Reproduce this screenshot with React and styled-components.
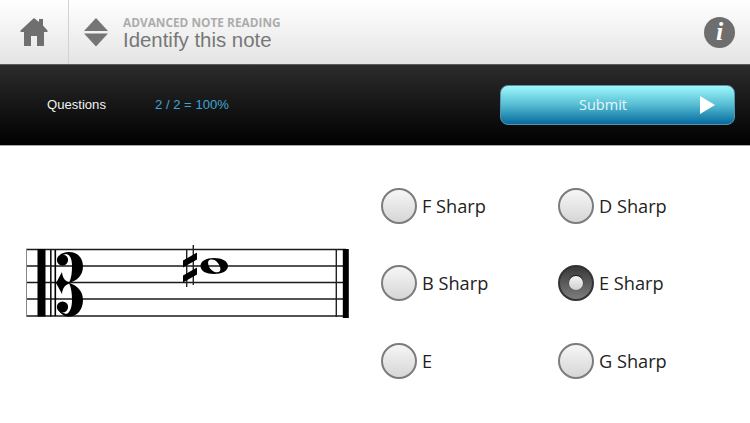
import styled, { createGlobalStyle } from "styled-components";

const GlobalStyle = createGlobalStyle`
  html, body {
    margin: 0;
    padding: 0;
    background: #fff;
  }
`;

const OPTIONS = [
  { label: "F Sharp" },
  { label: "D Sharp" },
  { label: "B Sharp" },
  { label: "E Sharp", selected: true },
  { label: "E" },
  { label: "G Sharp" },
];

const STAFF_LINES = [249.5, 266, 282.5, 299, 316];

const HomeIcon = () => (
  <svg width="28" height="30" viewBox="0 0 28 30">
    <path d="M14 1 L19 5 V2 H23 V8.5 L27.5 13.5 V15 H24 V29 H17 V19 H11 V29 H4 V15 H0.5 V13.5 Z" fill="#6f6f6f" />
  </svg>
);

const SortIcon = () => (
  <svg width="24" height="29" viewBox="0 0 24 29">
    <path d="M12 0 L24 13 H0 Z M0 15.5 H24 L12 28.5 Z" fill="#757575" />
  </svg>
);

const Staff = () => (
  <StaffSvg viewBox="26 240 326 85">
    {STAFF_LINES.map((y) => (
      <line key={y} x1="26" x2="346" y1={y} y2={y} stroke="#1a1a1a" strokeWidth="1.4" />
    ))}
    <rect x="26" y="249" width="1" height="68" fill="#888" />
    <rect x="37.5" y="249" width="8" height="67.5" fill="#000" />
    <rect x="50" y="249" width="1.6" height="67.5" fill="#111" />
    <rect x="54.5" y="250" width="1.6" height="66" fill="#000" />
    <path d="M56 283 L62 272 C62.5 278 65 281.5 71 283 C65 284.5 62.5 288 62 294 Z" fill="#000" />
    <path d="M59 256 C61 253 65 252 69 252 C77.5 252 83 258 83 266.5 C83 275 77 281 69 283 C71.5 278 72 272 72 266 C72 259 70 254.5 66 254 Z" fill="#000" />
    <circle cx="62.5" cy="260" r="5.6" fill="#000" />
    <path d="M59 311 C61 314.5 65 316.5 69 316.5 C77.5 316.5 83 309 83 300 C83 291 77 285 69 283 C71.5 288 72 294 72 300 C72 307 70 313 66 314 Z" fill="#000" />
    <circle cx="62.5" cy="307" r="5.6" fill="#000" />

    <line x1="186.7" x2="186.7" y1="250" y2="287" stroke="#222" strokeWidth="1.4" />
    <line x1="193.3" x2="193.3" y1="245" y2="285" stroke="#222" strokeWidth="1.4" />
    <path d="M183 260.5 L197 252.5 V259.5 L183 267.5 Z M183 275.5 L197 267.5 V274.5 L183 282.5 Z" fill="#000" />
    <path
      fillRule="evenodd"
      d="M214 258 C222 258 228 261 228 266 C228 271 222 274 214 274 C206 274 200.5 271 200.5 266 C200.5 261 206 258 214 258 Z M209.5 260 C207 261 208 266 211 269.5 C214 272.5 218 273 219.5 271.5 C221.5 270 220 265 217 262 C214.5 259.5 211.5 259 209.5 260 Z"
      fill="#000"
    />

    <rect x="335.6" y="249" width="1.4" height="68" fill="#222" />
    <rect x="342.8" y="249" width="6" height="69" fill="#000" />
  </StaffSvg>
);

export default function App() {
  return (
    <Page>
      <GlobalStyle />
      <Header>
        <HomeButton>
          <HomeIcon />
        </HomeButton>
        <SortButton>
          <SortIcon />
        </SortButton>
        <Titles>
          <Eyebrow>ADVANCED NOTE READING</Eyebrow>
          <Title>Identify this note</Title>
        </Titles>
        <InfoButton>i</InfoButton>
      </Header>

      <ScoreBar>
        <ScoreLabel>Questions</ScoreLabel>
        <ScoreValue>2 / 2 = 100%</ScoreValue>
        <SubmitButton>
          <SubmitText>Submit</SubmitText>
          <PlayArrow />
        </SubmitButton>
      </ScoreBar>

      <Main>
        <Staff />
        <OptionGrid>
          {OPTIONS.map((o) => (
            <Option key={o.label}>
              <Radio $selected={o.selected} />
              <OptionLabel>{o.label}</OptionLabel>
            </Option>
          ))}
        </OptionGrid>
      </Main>
    </Page>
  );
}

const Page = styled.div`
  width: 750px;
  height: 423px;
  overflow: hidden;
  background: #fff;
  display: flex;
  flex-direction: column;
`;

const Header = styled.div`
  height: 64px;
  flex: none;
  display: flex;
  align-items: center;
  background: linear-gradient(#ffffff, #e4e4e4);
  border-bottom: 1px solid #5c5c5c;
`;

const HomeButton = styled.div`
  width: 68px;
  height: 64px;
  box-sizing: content-box;
  border-right: 1px solid #d2d2d2;
  display: flex;
  align-items: center;
  justify-content: center;
`;

const SortButton = styled.div`
  margin-left: 15px;
  width: 24px;
  height: 29px;
  display: flex;
`;

const Titles = styled.div`
  margin: 2px 0 0 15px;
  display: flex;
  flex-direction: column;
  flex: 1;
`;

const Eyebrow = styled.div`
  font-family: "Open Sans", sans-serif;
  font-weight: 700;
  font-size: 11.85px;
  line-height: 14px;
  color: #acacac;
`;

const Title = styled.div`
  font-family: "Liberation Sans", sans-serif;
  font-size: 20.4px;
  line-height: 22px;
  color: #777;
`;

const InfoButton = styled.div`
  width: 31px;
  height: 31px;
  margin-right: 15px;
  border-radius: 50%;
  background: #6e6e6e;
  color: #fff;
  display: flex;
  align-items: center;
  justify-content: center;
  font-family: "Liberation Serif", serif;
  font-style: italic;
  font-weight: 700;
  font-size: 26px;
`;

const ScoreBar = styled.div`
  height: 80px;
  flex: none;
  display: flex;
  align-items: center;
  background: linear-gradient(#2c2c2c, #000);
  border-bottom: 1px solid #a8a8a8;
  font-family: "Liberation Sans", sans-serif;
  font-size: 13.1px;
`;

const ScoreLabel = styled.span`
  margin: 0 0 2px 47px;
  width: 108px;
  color: #f2f2f2;
`;

const ScoreValue = styled.span`
  margin-bottom: 2px;
  color: #3ea6d6;
  flex: 1;
`;

const SubmitButton = styled.div`
  width: 235px;
  height: 40px;
  margin-right: 15px;
  box-sizing: border-box;
  padding: 0 19px 0 78px;
  display: flex;
  align-items: center;
  justify-content: space-between;
  border-radius: 8px;
  border: 1px solid #5a93a8;
  background: linear-gradient(#9ef8fb, #55bcd2 50%, #066a9f);
`;

const SubmitText = styled.span`
  margin-bottom: 2px;
  font-family: "Open Sans", sans-serif;
  font-size: 14.5px;
  color: #e6f7fa;
`;

const PlayArrow = styled.div`
  width: 0;
  height: 0;
  border-left: 15px solid #fff;
  border-top: 9px solid transparent;
  border-bottom: 9px solid transparent;
`;

const Main = styled.div`
  flex: 1;
  display: flex;
  align-items: flex-start;
`;

const StaffSvg = styled.svg`
  width: 326px;
  height: 85px;
  margin: 94px 0 0 26px;
  flex: none;
`;

const OptionGrid = styled.div`
  margin: 42px 0 0 29px;
  display: grid;
  grid-template-columns: 177px 177px;
  grid-auto-rows: 36px;
  row-gap: 41.4px;
`;

const Option = styled.div`
  display: flex;
  align-items: center;
  gap: 5px;
`;

const Radio = styled.div`
  width: 36px;
  height: 36px;
  box-sizing: border-box;
  border-radius: 50%;
  flex: none;
  position: relative;
  border: 2px solid ${(p) => (p.$selected ? "#333" : "#7c7c7c")};
  background: ${(p) =>
    p.$selected
      ? "linear-gradient(#3a3a3a, #7c7c7c)"
      : "linear-gradient(#f6f6f6, #d6d6d6)"};

  &::after {
    content: "";
    display: ${(p) => (p.$selected ? "block" : "none")};
    position: absolute;
    left: 9px;
    top: 9px;
    width: 14px;
    height: 14px;
    border-radius: 50%;
    background: linear-gradient(#f4f4f4, #cfcfcf);
    box-shadow: 0 -1px 1px #111;
  }
`;

const OptionLabel = styled.span`
  font-family: "Open Sans", sans-serif;
  font-size: 18.2px;
  color: #222;
`;
